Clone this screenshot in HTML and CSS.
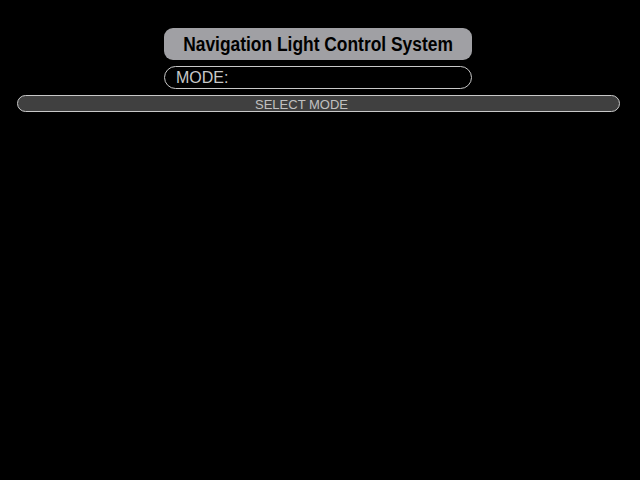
FILE: index.html
```html
<!DOCTYPE html>
<html>
<head>
<meta charset="utf-8">
<link rel="stylesheet" href="styles.css">
</head>
<body>
<div class="screen">
  <div class="header">
    <div class="title"><span class="title-text">Navigation Light Control System</span></div>
    <div class="mode">MODE:</div>
  </div>
  <div class="select">SELECT MODE</div>
</div>
</body>
</html>
```

FILE: styles.css
```css
html, body {
  margin: 0;
  padding: 0;
  background: #000;
}
.screen {
  width: 640px;
  height: 480px;
  background: #000;
  padding-top: 28px;
  box-sizing: border-box;
  font-family: "Liberation Sans", Arial, sans-serif;
}
.header {
  width: 308px;
  margin-left: 164px;
  display: flex;
  flex-direction: column;
  gap: 6px;
}
.title {
  height: 32px;
  background: #a0a0a4;
  border-radius: 9px;
  color: #000;
  display: flex;
  align-items: center;
  justify-content: center;
  white-space: nowrap;
}
.title-text {
  display: inline-block;
  font-family: "Liberation Sans", Arial, sans-serif;
  font-weight: bold;
  font-size: 20px;
  line-height: 1;
  transform: scaleX(0.87);
  padding-top: 0;
}
.mode {
  height: 23px;
  box-sizing: border-box;
  border: 1px solid #c8c8c8;
  border-radius: 12px;
  color: #c8c8c8;
  font-size: 16px;
  padding-left: 11px;
  display: flex;
  align-items: center;
  line-height: 1;
}
.select {
  margin-top: 6px;
  margin-left: 17px;
  width: 603px;
  height: 17px;
  box-sizing: border-box;
  background: #404040;
  border: 1px solid #c8c8c8;
  border-radius: 9px;
  color: #c0c0c0;
  font-size: 13px;
  display: flex;
  align-items: center;
  justify-content: center;
  padding-right: 34px;
  padding-top: 1px;
  line-height: 1;
}
```
